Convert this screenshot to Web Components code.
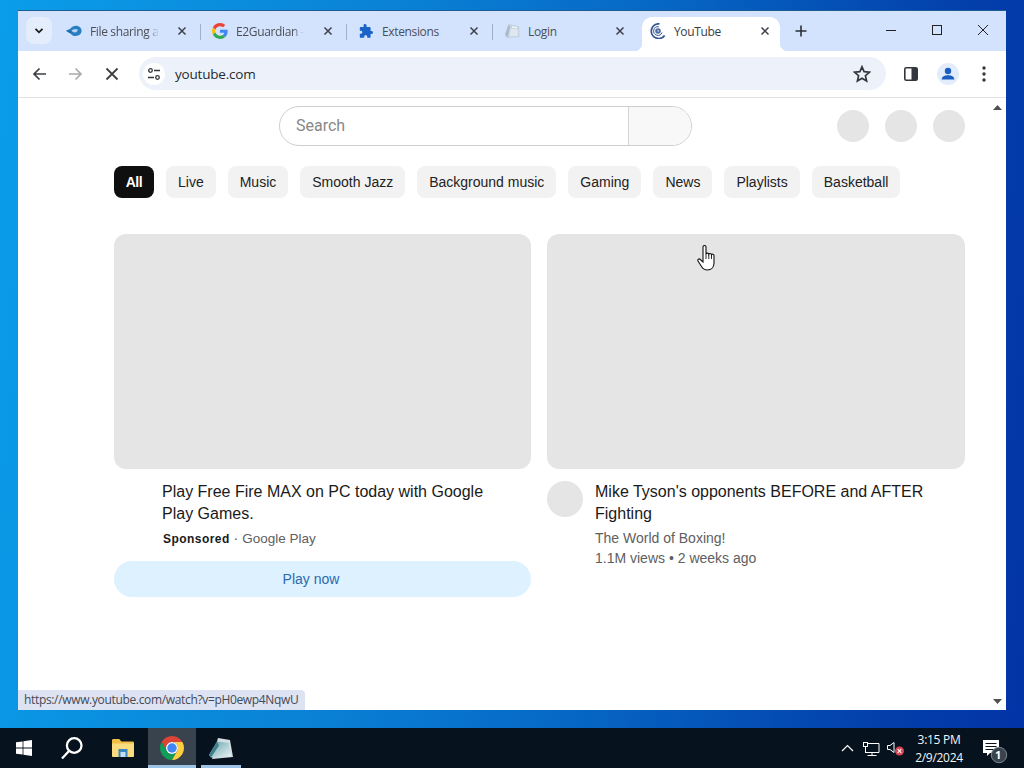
<!DOCTYPE html>
<html><head><meta charset="utf-8">
<style>
html,body{margin:0;padding:0;width:1024px;height:768px;overflow:hidden;font-family:"Liberation Sans",sans-serif}
</style></head><body>
<app-desktop>
  <browser-window>
    <tab-strip slot="tabs">
      <browser-tab label="File sharing a" icon="cloud" fade></browser-tab>
      <browser-tab label="E2Guardian -" icon="google" fade></browser-tab>
      <browser-tab label="Extensions" icon="puzzle"></browser-tab>
      <browser-tab label="Login" icon="note" nosep></browser-tab>
      <browser-tab label="YouTube" icon="spin" active nosep></browser-tab>
    </tab-strip>
    <tool-bar slot="tools" url="youtube.com"></tool-bar>
    <yt-page slot="page">
      <yt-chip active>All</yt-chip><yt-chip>Live</yt-chip><yt-chip>Music</yt-chip><yt-chip>Smooth Jazz</yt-chip><yt-chip>Background music</yt-chip><yt-chip>Gaming</yt-chip><yt-chip>News</yt-chip><yt-chip>Playlists</yt-chip><yt-chip>Basketball</yt-chip>
      <yt-card slot="cards" title-text="Play Free Fire MAX on PC today with Google Play Games." ad sub="Google Play" cta="Play now"></yt-card>
      <yt-card slot="cards" title-text="Mike Tyson's opponents BEFORE and AFTER Fighting" avatar sub="The World of Boxing!" meta="1.1M views • 2 weeks ago"></yt-card>
    </yt-page>
  </browser-window>
  <task-bar slot="taskbar"></task-bar>
</app-desktop>
<script>
const def=(n,html)=>{customElements.define(n,class extends HTMLElement{connectedCallback(){if(this.shadowRoot)return;const r=this.attachShadow({mode:'open'});r.innerHTML=typeof html==='function'?html(this):html;}})};

const ICONS={
cloud:`<svg width="16" height="16" viewBox="0 0 16 16"><path d="M0 7.800 4.600 5.500C5.800 3.700 7.800 2.800 9.800 2.800c3.300 0 5.800 2.200 5.800 5s-2.500 5.200-5.800 5.200c-2.300 0-4.300-1-5.300-2.600Z" fill="#2a7fc4"/><path d="M5.500 7.600C7 6.400 9 6 11.800 6.400 11.600 8.400 10 9.600 8.400 9.400 7.200 9.200 6.200 8.500 5.500 7.600Z" fill="#bcd6f2"/><path d="M0 7.800 5.500 7.600l-1 2.800Z" fill="#1b6ab0"/></svg>`,
google:`<svg width="16" height="16" viewBox="0 0 48 48"><path fill="#EA4335" d="M24 9.500c3.500 0 6.700 1.300 9.100 3.500l6.800-6.800C35.800 2.400 30.300 0 24 0 14.600 0 6.500 5.400 2.600 13.200l7.900 6.100C12.400 13.700 17.700 9.500 24 9.500z"/><path fill="#4285F4" d="M46.900 24.500c0-1.600-.1-3.100-.4-4.500H24v9h12.900c-.6 3-2.200 5.500-4.700 7.200l7.600 5.900c4.500-4.100 7.100-10.200 7.100-17.600z"/><path fill="#FBBC05" d="M10.500 28.700c-.5-1.500-.8-3-.8-4.700s.3-3.200.8-4.700l-7.900-6.100C1 16.500 0 20.100 0 24s1 7.500 2.600 10.800l7.900-6.100z"/><path fill="#34A853" d="M24 48c6.500 0 11.900-2.100 15.900-5.800l-7.600-5.900c-2.200 1.400-5 2.300-8.300 2.300-6.300 0-11.600-4.200-13.500-9.900l-7.900 6.100C6.500 42.600 14.600 48 24 48z"/></svg>`,
puzzle:`<svg width="16" height="16" viewBox="0 0 16 16"><path fill="#1a63c9" d="M6 1.200c1.300-.6 2.600.2 2.600 1.500V4h3.100c.5 0 .9.400.9.900V8h1c1.800 0 2 3 0 3h-1v2.900c0 .5-.4.900-.9.900H9.200v-1.200c0-1.800-3-1.800-3 0v1.200H2.700c-.5 0-.9-.4-.9-.9v-3.200H3c1.800 0 1.800-3 0-3H1.800V4.900c0-.5.400-.9.900-.9H5.600V2.600c0-.6 0-1.100.4-1.400Z"/></svg>`,
note:`<svg width="16" height="16" viewBox="0 0 16 16"><path d="M1 11.500 4.800 1 15 3.200 15.500 14 3.400 15Z" fill="#c5d2df"/><path d="M4.800 1 1 11.500 3.400 15 6 5Z" fill="#a9bbcb"/><path d="M6.500 5.500l7.500 1-.2 6.500-8.500.6Z" fill="#dfe8f1"/><path d="M8 4l5 .8" stroke="#eef4fa" stroke-width="1.500"/></svg>`,
spin:`<svg width="16" height="16" viewBox="0 0 16 16" fill="none"><path d="M14.600 12.400A7.300 7.300 0 1 1 9.500.9" stroke="#33558f" stroke-width="1.800"/><path d="M12 9.500A4.300 4.300 0 1 1 8.800 3.800" stroke="#33558f" stroke-width="1"/><circle cx="8" cy="8" r="2.800" fill="#4e6c9e"/><path d="M7 6.500 9.500 7.800 8 9.500Z" fill="#b8c6dc"/></svg>`
};

def('app-desktop',`<style>
:host{display:flex;flex-direction:column;width:1024px;height:768px;background:linear-gradient(97deg,#0a9de9 0%,#0a82d6 35%,#0666c4 60%,#0341ac 85%,#0333a6 100%)}
.w{flex:1;min-height:0;display:flex;padding:11px 18px 18px}
</style><div class="w"><slot></slot></div><slot name="taskbar"></slot>`);

def('browser-window',`<style>
:host{display:flex;flex-direction:column;flex:1;background:#fff;position:relative;box-shadow:0 -1px 0 #1d5c92;min-width:0}
.status{position:absolute;left:0;bottom:0;height:20px;width:287px;box-sizing:border-box;background:#dde3f3;border-top-right-radius:4px;padding-left:6px;font:12px/20px "Open Sans",sans-serif;color:#444a56;white-space:nowrap;letter-spacing:-.34px}
.cursor{position:absolute;left:679px;top:234px;line-height:0}
</style><slot name="tabs"></slot><slot name="tools"></slot><slot name="page"></slot>
<div class="status">https://www.youtube.com/watch?v=pH0ewp4NqwU</div>
<div class="cursor"><svg width="20" height="26" viewBox="0 0 20 26"><path d="M6 2c0-2 3-2 3 0V9c.3-1.200 2.600-1.200 2.800.2.400-1 2.400-1 2.600.4.500-.8 2.600-.6 2.600 1V18c0 4-2.500 7-6.500 7-3 0-4.800-1.500-6-3.500L1 16c-.8-1.500 1-2.800 2.300-1.500L6 17Z" fill="#fff" stroke="#111" stroke-width="1.100"/><path d="M9 9v5M11.800 9.500V14M14.500 10v4" stroke="#111" stroke-width=".9"/></svg></div>`);

def('tab-strip',`<style>
:host{display:flex;height:40px;box-sizing:border-box;background:#d3e3fd;padding:6px 0 0 8px;align-items:flex-start}
.chev{width:26px;height:27px;border-radius:8px;background:#e4edfc;display:grid;place-items:center;margin-right:2px}
.tabs{display:flex}
.plus{width:16px;height:16px;margin:6px 0 0 9px;line-height:0}
.ctl{margin-left:auto;display:flex;margin-top:-6px}
.ctl div{width:46px;height:38px;display:grid;place-items:center}
</style>
<div class="chev"><svg width="10" height="8" viewBox="0 0 10 8"><path d="M1.500 1.800 5 5.300 8.500 1.800" fill="none" stroke="#1b1c1f" stroke-width="1.800"/></svg></div>
<div class="tabs"><slot></slot></div>
<div class="plus"><svg width="16" height="16" viewBox="0 0 16 16"><path d="M8 2.500v11M2.500 8h11" stroke="#2c3038" stroke-width="1.600"/></svg></div>
<div class="ctl">
<div><svg width="12" height="12" viewBox="0 0 12 12"><path d="M1 6.500h10" stroke="#222" stroke-width="1"/></svg></div>
<div><svg width="12" height="12" viewBox="0 0 12 12"><rect x="1.500" y="1.500" width="9" height="9" fill="none" stroke="#222" stroke-width="1"/></svg></div>
<div><svg width="12" height="12" viewBox="0 0 12 12"><path d="M1 1l10 10M11 1 1 11" stroke="#222" stroke-width="1"/></svg></div>
</div>`);

def('browser-tab',t=>{
 const a=t.hasAttribute('active'),s=!t.hasAttribute('nosep'),f=t.hasAttribute('fade');
 const m=f?'-webkit-mask-image:linear-gradient(90deg,#000 84%,transparent 100%);mask-image:linear-gradient(90deg,#000 84%,transparent 100%);':'';
 return `<style>
:host{display:block;width:146px;height:34px;position:relative;box-sizing:border-box}
.in{height:34px;box-sizing:border-box;padding:0 10px 6px 12px;display:flex;align-items:center;position:relative;${a?'background:#fff;margin:0 4px;padding:0 7px 6px 8px;border-radius:10px 10px 0 0;':''}}
.ic{width:16px;height:16px;line-height:0;flex:none;margin-right:8px}
.t{flex:1;min-width:0;white-space:nowrap;font:12px/16px "Open Sans",sans-serif;color:${a?'#3a3d42':'#4b4f57'};letter-spacing:-.35px;margin-top:2px}
.t span{display:inline-block;${m}}
.x{width:16px;height:16px;line-height:0;flex:none;margin-left:8px}
.sep{position:absolute;right:-1px;top:7px;width:1px;height:16px;background:#9fb0c9}
.fl{position:absolute;bottom:0;width:8px;height:8px}
.fl.l{left:-8px;background:radial-gradient(circle at 0 0,transparent 8px,#fff 8.500px)}
.fl.r{right:-8px;background:radial-gradient(circle at 100% 0,transparent 8px,#fff 8.500px)}
</style><div class="in"><span class="ic">${ICONS[t.getAttribute('icon')]}</span><span class="t"><span>${t.getAttribute('label')}</span></span><span class="x"><svg width="16" height="16" viewBox="0 0 16 16"><path d="M4.500 4.500l7 7M11.500 4.500l-7 7" stroke="#3c4149" stroke-width="1.500"/></svg></span>${a?'<i class="fl l"></i><i class="fl r"></i>':''}</div>${s?'<i class="sep"></i>':''}`});

def('tool-bar',t=>`<style>
:host{display:flex;align-items:center;height:47px;box-sizing:border-box;background:#fff;border-bottom:1px solid #e1e3e8;padding:0 0 1px 13px;border-radius:8px 8px 0 0;margin-top:0}
.b{width:18px;height:18px;line-height:0;flex:none}
.om{flex:none;width:747px;height:33px;border-radius:17px;margin-left:18px;background:#edf2fa;display:flex;align-items:center;padding:0 15px 0 4px;box-sizing:border-box}
.si{width:22px;height:22px;border-radius:50%;background:#fff;display:grid;place-items:center;margin-right:10px}
.u{flex:1;font:13.500px/18px "Open Sans",sans-serif;color:#262a30;letter-spacing:-.2px}
</style>
<span class="b"><svg width="18" height="18" viewBox="0 0 18 18"><path d="M15 9H3.500M8.500 3.500 3 9l5.500 5.500" fill="none" stroke="#3c4043" stroke-width="1.700"/></svg></span>
<span class="b" style="margin-left:17px"><svg width="18" height="18" viewBox="0 0 18 18"><path d="M3 9h11.500M9.500 3.500 15 9l-5.500 5.500" fill="none" stroke="#a9abae" stroke-width="1.700"/></svg></span>
<span class="b" style="margin-left:19px"><svg width="18" height="18" viewBox="0 0 18 18"><path d="M3.500 3.500l11 11M14.500 3.500l-11 11" stroke="#3c4043" stroke-width="1.800"/></svg></span>
<div class="om"><span class="si"><svg width="14" height="14" viewBox="0 0 14 14" fill="none" stroke="#33373d" stroke-width="1.300"><circle cx="3.500" cy="3.500" r="1.800"/><path d="M7 3.500h6M1 10.500h6"/><circle cx="10.500" cy="10.500" r="1.800"/></svg></span><span class="u">${t.getAttribute('url')}</span>
<span class="b"><svg width="18" height="18" viewBox="0 0 18 18"><path d="M9 1.800l2.100 4.900 5.300.5-4 3.500 1.200 5.200L9 13.200l-4.600 2.700 1.200-5.200-4-3.500 5.300-.5Z" fill="none" stroke="#33373d" stroke-width="1.700"/></svg></span></div>
<span class="b" style="margin-left:16px"><svg width="18" height="18" viewBox="0 0 18 18"><rect x="2.800" y="2.800" width="12.400" height="12.400" rx="1.500" fill="none" stroke="#33373d" stroke-width="1.600"/><rect x="9.500" y="3" width="5.700" height="12" fill="#33373d"/></svg></span>
<span class="b" style="margin-left:17px;width:22px;height:22px"><svg width="22" height="22" viewBox="0 0 22 22"><circle cx="11" cy="11" r="11" fill="#e3ecfb"/><circle cx="11" cy="8" r="3.200" fill="#1a5fc0"/><path d="M4.700 16.500c0-3 3-4.300 6.300-4.300s6.300 1.300 6.300 4.300Z" fill="#1a5fc0"/></svg></span>
<span class="b" style="margin-left:23px;width:4px;height:16px"><svg width="4" height="16" viewBox="0 0 4 16" fill="#33373d"><circle cx="2" cy="2" r="1.700"/><circle cx="2" cy="8" r="1.700"/><circle cx="2" cy="14" r="1.700"/></svg></span>`);

def('yt-page',`<style>
:host{display:flex;flex:1;min-height:0;background:#fff;position:relative}
.main{flex:1;min-width:0;padding:8px 25px 0 96px;box-sizing:border-box}
.top{display:flex;align-items:center;height:40px}
.s{margin-left:165px;width:413px;height:40px;box-sizing:border-box;border:1px solid #cfcfcf;border-radius:20px;display:flex;overflow:hidden}
.s .p{flex:1;padding-left:16px;font:16px/38px Roboto,sans-serif;color:#888}
.s .g{width:63px;box-sizing:border-box;background:#f8f8f8;border-left:1px solid #d3d3d3}
.c{width:32px;height:32px;border-radius:50%;background:#e5e5e5;margin-left:16px}
.chips{display:flex;gap:12px;margin-top:20px}
.cards{display:flex;gap:16px;margin-top:36px}
.bar{width:16px;flex:none;display:flex;flex-direction:column;justify-content:space-between;align-items:center;padding:7px 2px 6px 0;box-sizing:border-box}
</style><div class="main"><div class="top"><div class="s"><span class="p">Search</span><span class="g"></span></div><div class="c" style="margin-left:145px"></div><div class="c"></div><div class="c"></div></div>
<div class="chips"><slot></slot></div><div class="cards"><slot name="cards"></slot></div></div>
<div class="bar"><svg width="9" height="5" viewBox="0 0 9 5"><path d="M4.500 0 9 5H0Z" fill="#505050"/></svg><svg width="9" height="5" viewBox="0 0 9 5"><path d="M0 0h9L4.500 5Z" fill="#505050"/></svg></div>`);

def('yt-chip',t=>{const a=t.hasAttribute('active');return `<style>
:host{display:block;height:32px;${a?'width:40px;text-align:center;':'padding:0 12px;'}border-radius:8px;background:${a?'#0f0f0f':'#f2f2f2'};color:${a?'#fff':'#222'};font:${a?'bold ':''}14px/32px "Liberation Sans",sans-serif;white-space:nowrap;${a?'letter-spacing:-.4px;':''}}
</style><slot></slot>`});

def('yt-card',t=>{const ad=t.hasAttribute('ad');return `<style>
:host{display:block;flex:none;width:${ad?417:418}px}
.th{height:235px;border-radius:12px;background:#e5e5e5}
.row{display:flex;gap:12px;margin-top:12px}
.av{width:36px;height:36px;border-radius:50%;flex:none;${t.hasAttribute('avatar')?'background:#e5e5e5':''}}
.tt{font:16px/22px "Liberation Sans",sans-serif;color:#1a1a1a;margin-bottom:3px}
.sub,.meta{font:14px/20px "Liberation Sans",sans-serif;color:#606060}
.ad{font-size:13.500px}
.sp{font:bold 12px/20px "Liberation Sans",sans-serif;color:#1a1a1a;letter-spacing:.45px;margin-left:1px}
.cta{height:36px;border-radius:18px;background:#def1ff;color:#2b69ad;font:14px/36px "Liberation Sans",sans-serif;text-align:center;margin-top:12px;padding-right:23px}
</style><div class="th"></div><div class="row"><div class="av"></div><div style="flex:1;min-width:0;${ad?'padding-right:30px':'padding-right:20px'}"><div class="tt">${t.getAttribute('title-text')}</div>
<div class="sub">${ad?'<span class="sp">Sponsored</span> · <span class="ad">':'<span>'}${t.getAttribute('sub')}</span></div>${t.getAttribute('meta')?`<div class="meta">${t.getAttribute('meta')}</div>`:''}</div></div>${t.getAttribute('cta')?`<div class="cta">${t.getAttribute('cta')}</div>`:''}`});

def('task-bar',`<style>
:host{display:flex;align-items:center;height:40px;flex:none;background:#06121d;color:#fff;position:relative}
.i{height:40px;display:grid;place-items:center;flex:none;box-sizing:border-box;line-height:0}
.on{background:#38434e;border-bottom:3px solid #9cc3e6}
.un{border-bottom:3px solid #9cc3e6}
.tray{margin-left:auto;display:flex;align-items:center;height:40px}
.clk{width:64px;padding-top:2px;text-align:center;font:12px/18px "Open Sans",sans-serif;color:#f4f6f8;letter-spacing:-.3px}
</style>
<div class="i" style="width:48px"><svg width="16" height="16" viewBox="0 0 16 16" fill="#fff"><path d="M0 2.300 6.600 1.400V7.600H0ZM7.400 1.300 16 0V7.600H7.400ZM0 8.400H6.600V14.600L0 13.700ZM7.400 8.400H16V16L7.400 14.700Z"/></svg></div>
<div class="i" style="width:48px"><svg width="24" height="24" viewBox="0 0 24 24" fill="none" stroke="#fff" stroke-width="2.300"><circle cx="14.200" cy="9.500" r="7.300"/><path d="M9 15 2 22.500"/></svg></div>
<div class="i" style="width:52px;padding-left:2px"><svg width="22" height="18" viewBox="0 0 22 18"><path d="M0 1.500C0 .7.500 0 1.300 0h6l2 2.500h11.400c.7 0 1.300.6 1.300 1.300V16.500c0 .8-.6 1.500-1.300 1.500H1.300C.6 18 0 17.300 0 16.500Z" fill="#f2bf45"/><path d="M0 4.500h22V16.500c0 .8-.6 1.500-1.300 1.500H1.300C.6 18 0 17.300 0 16.500Z" fill="#f9dc7e"/><path d="M6.500 10h9v8h-9Z" fill="#3a86c2"/><path d="M8.500 13h5v5h-5Z" fill="#c6deef"/></svg></div>
<div class="i on" style="width:48px"><svg width="24" height="24" viewBox="0 0 48 48" style="margin-top:3px"><path fill="#db4437" d="M24 0A24 24 0 0 1 44.780 12L24 12A12 12 0 0 0 13.610 30L3.220 12A24 24 0 0 1 24 0Z"/><path fill="#0f9d58" d="M3.220 12 13.610 30A12 12 0 0 0 34.390 30L24 48A24 24 0 0 1 3.220 12Z"/><path fill="#ffcd40" d="M44.780 12 24 12A12 12 0 0 1 34.390 30L24 48A24 24 0 0 0 44.780 12Z"/><circle cx="24" cy="24" r="12" fill="#fff"/><circle cx="24" cy="24" r="9.500" fill="#4285f4"/></svg></div>
<div class="i un" style="width:40px;margin-left:5px"><svg width="24" height="21" viewBox="0 0 24 21" style="margin-top:3px"><defs><linearGradient id="n" x1="1" y1="1" x2="0" y2="0"><stop offset="0" stop-color="#eef6f7"/><stop offset="1" stop-color="#5f9faa"/></linearGradient></defs><path d="M9 0 21 2 24 19 3 21Z" fill="#d3dde2"/><path d="M8 3.500 19.500 5 22 18.500 2 19.500 0 17Z" fill="url(#n)"/><path d="M8 3.500 0 17l2 2.500 8-12Z" fill="#3f7f8c"/></svg></div>
<div class="tray">
<span style="margin-right:9px;line-height:0"><svg width="13" height="8" viewBox="0 0 13 8"><path d="M1 7 6.500 1.500 12 7" fill="none" stroke="#fff" stroke-width="1.200"/></svg></span>
<span style="margin-right:6.500px;line-height:0;margin-top:2px"><svg width="17" height="15" viewBox="0 0 17 15" fill="none" stroke="#fff" stroke-width="1"><path d="M4.500 1.500H16V10.500H2"/><path d="M9 10.500V13.500M4.500 13.500H13.500"/><rect x=".5" y=".5" width="4" height="4" fill="#06121d"/><path d="M2.500 4.500V10.500"/></svg></span>
<span style="margin-right:2.500px;line-height:0"><svg width="18" height="16" viewBox="0 0 18 16"><path d="M.5 5.500H3L7 2.500V12.500L3 9.500H.5Z" fill="none" stroke="#fff" stroke-width="1"/><circle cx="12.500" cy="11" r="4.500" fill="#d64553"/><path d="M10.700 9.200l3.600 3.600M14.300 9.200l-3.600 3.600" stroke="#fff" stroke-width="1.100"/></svg></span>
<div class="clk">3:15 PM<br>2/9/2024</div>
<span style="width:48px;height:40px;display:grid;place-items:center;position:relative;box-sizing:border-box;padding-left:2px;margin-right:5px;line-height:0"><svg width="26" height="26" viewBox="0 0 26 26" style="margin-top:8px"><path d="M0 1H16V14H7L4 17V14H0Z" fill="#fff"/><path d="M2.500 4.500h11M2.500 7.500h11M2.500 10.500h8" stroke="#06121d" stroke-width="1"/><circle cx="16" cy="16" r="7.700" fill="#38434e" stroke="#7e878f" stroke-width="1"/></svg><b style="position:absolute;left:24px;top:20px;font:bold 11px/14px 'Open Sans',sans-serif;color:#fff">1</b></span>
</div>`);
</script>
</body></html>
